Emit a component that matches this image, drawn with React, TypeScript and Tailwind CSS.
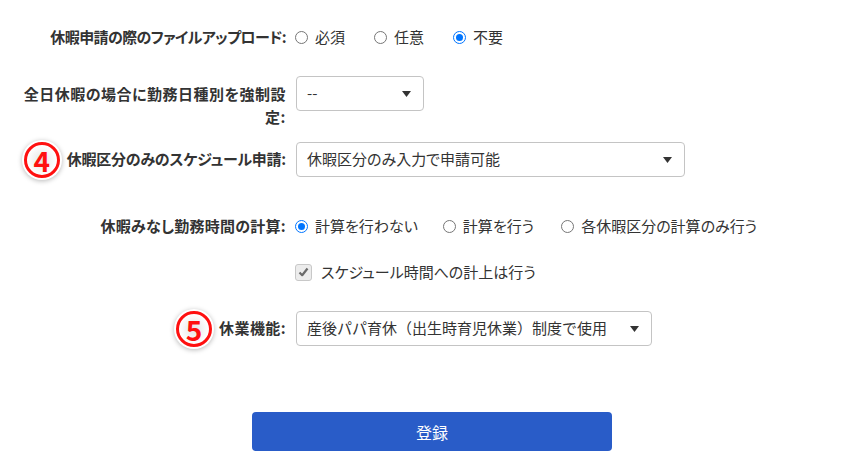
import React from "react";

const Radio = ({ checked }: { checked?: boolean }) => (
  <span
    className={
      "inline-flex items-center justify-center w-[13px] h-[13px] rounded-full border shrink-0 " +
      (checked ? "border-[#0075ff] bg-white" : "border-[#767676] bg-white")
    }
  >
    {checked && <span className="w-[7px] h-[7px] rounded-full bg-[#0075ff]" />}
  </span>
);

const Option = ({ label, checked, gap }: { label: string; checked?: boolean; gap: string }) => (
  <span className={"inline-flex items-center " + gap}>
    <Radio checked={checked} />
    <span className="ml-[7px]">{label}</span>
  </span>
);

const Caret = () => (
  <svg width="9" height="6" viewBox="0 0 9 6" className="shrink-0">
    <path d="M0 0 L9 0 L4.5 6 Z" fill="#333" />
  </svg>
);

const Select = ({ value, width, textClass }: { value: string; width: string; textClass?: string }) => (
  <div
    className={
      "h-[35px] border border-[#c4c4c4] rounded-[4px] bg-white flex items-center justify-between pl-[10px] pr-[12px] " +
      width
    }
  >
    <span className={textClass}>{value}</span>
    <Caret />
  </div>
);

const Badge = ({ n }: { n: string }) => (
  <span className="w-[40px] h-[40px] rounded-full bg-white shadow-[0_1px_5px_rgba(0,0,0,0.28)] flex items-center justify-center shrink-0">
    <span className="w-[36px] h-[36px] rounded-full border-[3px] border-[#ff1010] flex items-center justify-center text-[#ff1010] text-[28px] font-bold leading-none bg-[radial-gradient(circle,#e4e4e4_0%,#ffffff_70%)]">
      {n}
    </span>
  </span>
);

export default function App() {
  return (
    <div
      className="w-[867px] h-[472px] bg-white text-[15px] text-[#333] [font-feature-settings:'palt'] overflow-hidden"
      style={{ fontFamily: '"Noto Sans CJK JP", "Noto Sans", sans-serif' }}
    >
      <div className="flex flex-col pt-[20px]">
        {/* Row 1 */}
        <div className="flex items-center h-[34px]">
          <div className="w-[287px] text-right font-bold tracking-[-0.6px] pr-[1px]">休暇申請の際のファイルアップロード:</div>
          <div className="ml-[8px] flex items-center">
            <Option label="必須" gap="mr-[29px]" />
            <Option label="任意" gap="mr-[29px]" />
            <Option label="不要" checked gap="mr-[29px]" />
          </div>
        </div>

        {/* Row 2 */}
        <div className="flex items-start mt-[22px]">
          <div className="w-[287px] text-right font-bold tracking-[0.5px] leading-[23px] pt-[6px] pr-[1px]">
            全日休暇の場合に勤務日種別を強制設
            <br />
            定:
          </div>
          <div className="ml-[9px]">
            <Select value="--" width="w-[128px]" />
          </div>
        </div>

        {/* Row 3 */}
        <div className="flex items-center mt-[14px] h-[35px]">
          <div className="w-[287px] flex items-center justify-end gap-[5px] font-bold pr-[1px]">
            <Badge n="4" />
            <span className="tracking-[-0.25px]">休暇区分のみのスケジュール申請:</span>
          </div>
          <div className="ml-[9px]">
            <Select value="休暇区分のみ入力で申請可能" width="w-[389px]" />
          </div>
        </div>

        {/* Row 4 */}
        <div className="flex items-center mt-[32px] h-[34px]">
          <div className="w-[287px] text-right font-bold tracking-[0.25px] pr-[1px]">休暇みなし勤務時間の計算:</div>
          <div className="ml-[8px] flex items-center">
            <Option label="計算を行わない" checked gap="mr-[25px]" />
            <Option label="計算を行う" gap="mr-[27px]" />
            <Option label="各休暇区分の計算のみ行う" gap="mr-[28px]" />
          </div>
        </div>

        {/* Row 5 */}
        <div className="flex items-center mt-[12px] h-[34px] pl-[295px]">
          <span className="w-[17px] h-[17px] rounded-[3px] border border-[#c8c8c8] bg-[#ececec] flex items-center justify-center shrink-0">
            <svg width="11" height="10" viewBox="0 0 11 10">
              <path d="M1.5 5.5 L4.2 8.2 L9.5 1.5" fill="none" stroke="#6a6a6a" strokeWidth="2.2" strokeLinejoin="round" />
            </svg>
          </span>
          <span className="ml-[9px]">スケジュール時間への計上は行う</span>
        </div>

        {/* Row 6 */}
        <div className="flex items-center mt-[22px] h-[35px]">
          <div className="w-[287px] flex items-center justify-end gap-[5px] font-bold tracking-[0.4px] pr-[1px]">
            <Badge n="5" />
            <span>休業機能:</span>
          </div>
          <div className="ml-[9px]">
            <Select
              value="産後パパ育休（出生時育児休業）制度で使用"
              width="w-[356px]"
              textClass="[font-feature-settings:normal]"
            />
          </div>
        </div>

        {/* Button */}
        <div className="mt-[66px] pl-[252px]">
          <button className="w-[360px] h-[39px] rounded-[4px] bg-[#295cc8] text-white text-[16px] flex items-center justify-center">
            登録
          </button>
        </div>
      </div>
    </div>
  );
}
